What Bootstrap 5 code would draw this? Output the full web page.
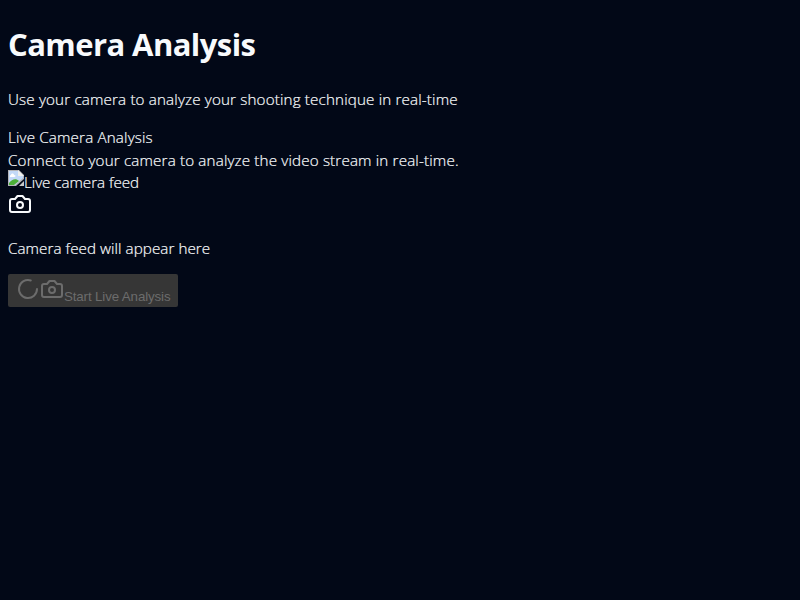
<!DOCTYPE html>
<html lang="en">
<head>
<meta charset="utf-8">
<meta name="viewport" content="width=device-width, initial-scale=1">
<title>Camera Analysis</title>
<link rel="stylesheet" href="https://cdn.jsdelivr.net/npm/bootstrap@5.3.0/dist/css/bootstrap.min.css">
<style>
body{background:#020817;color:#f8fafc;font-family:"Segoe UI","Open Sans",sans-serif;font-size:15.2px;font-weight:300;line-height:22px;letter-spacing:.155px;padding:0 8px;-webkit-text-stroke:.2px currentColor}
h1{font-size:31px;font-weight:700;line-height:43px;letter-spacing:-.57px;margin:23px 0 0;-webkit-text-stroke:0}
svg{flex:none}
.intro{margin:22px 0 16px}
.live-title{line-height:23px}
.feed-row{height:21px;letter-spacing:-.04px}
.feed-row svg{margin-top:-1px}
.feed-note{margin:21px 0 15px;letter-spacing:.06px}
.start-btn,.start-btn:disabled{width:170px;height:33px;padding:0 8px;border:0;border-radius:2px;background:#363636;color:#6c6c6c;opacity:1;font:400 13.33px/16px "Liberation Sans",Arial,sans-serif;letter-spacing:-.13px;-webkit-text-stroke:0}
.start-btn span{margin-bottom:2px}
.start-btn svg{margin-top:3px}
</style>
<script src="https://cdn.jsdelivr.net/npm/bootstrap@5.3.0/dist/js/bootstrap.bundle.min.js"></script>
</head>
<body>
<main class="d-flex flex-column align-items-start text-nowrap">
<h1>Camera Analysis</h1>
<p class="intro">Use your camera to analyze your shooting technique in real-time</p>
<div class="live-title">Live Camera Analysis</div>
<div>Connect to your camera to analyze the video stream in real-time.</div>
<div class="feed-row d-flex">
<svg width="16" height="16" viewBox="0 0 16 16"><path d="M0 0h11l5 5v4L8 16H0z" fill="#b4b4b8"/><path d="M1 1h9v5h5v2l-8 7H1z" fill="#c3d9f8"/><path d="M3 7c-2 0-1-2 0-2 0-2 3-2 3 0 2 0 2 2 0 2z" fill="#fff"/><path d="M1 15v-2c3-4 7-5 10-2l-5 4z" fill="#4caf38"/><path d="M10 0l6 6h-6z" fill="#eeeeee"/><path d="M16 11v5h-5z" fill="#c8c8c8"/></svg>
<span>Live camera feed</span>
</div>
<svg width="24" height="24" viewBox="0 0 24 24" fill="none" stroke="currentColor" stroke-width="2" stroke-linecap="round" stroke-linejoin="round"><path d="M14.5 4h-5L7 7H4a2 2 0 0 0-2 2v9a2 2 0 0 0 2 2h16a2 2 0 0 0 2-2V9a2 2 0 0 0-2-2h-3l-2.5-3z"/><circle cx="12" cy="13" r="3"/></svg>
<p class="feed-note">Camera feed will appear here</p>
<button class="btn start-btn d-flex align-items-start" disabled>
<svg width="24" height="24" viewBox="0 0 24 24" fill="none" stroke="currentColor" stroke-width="2" stroke-linecap="round" stroke-linejoin="round"><path d="M21 12a9 9 0 1 1-6.219-8.56"/></svg>
<svg width="24" height="24" viewBox="0 0 24 24" fill="none" stroke="currentColor" stroke-width="2" stroke-linecap="round" stroke-linejoin="round"><path d="M14.5 4h-5L7 7H4a2 2 0 0 0-2 2v9a2 2 0 0 0 2 2h16a2 2 0 0 0 2-2V9a2 2 0 0 0-2-2h-3l-2.5-3z"/><circle cx="12" cy="13" r="3"/></svg>
<span class="align-self-end">Start Live Analysis</span>
</button>
</main>
</body>
</html>
